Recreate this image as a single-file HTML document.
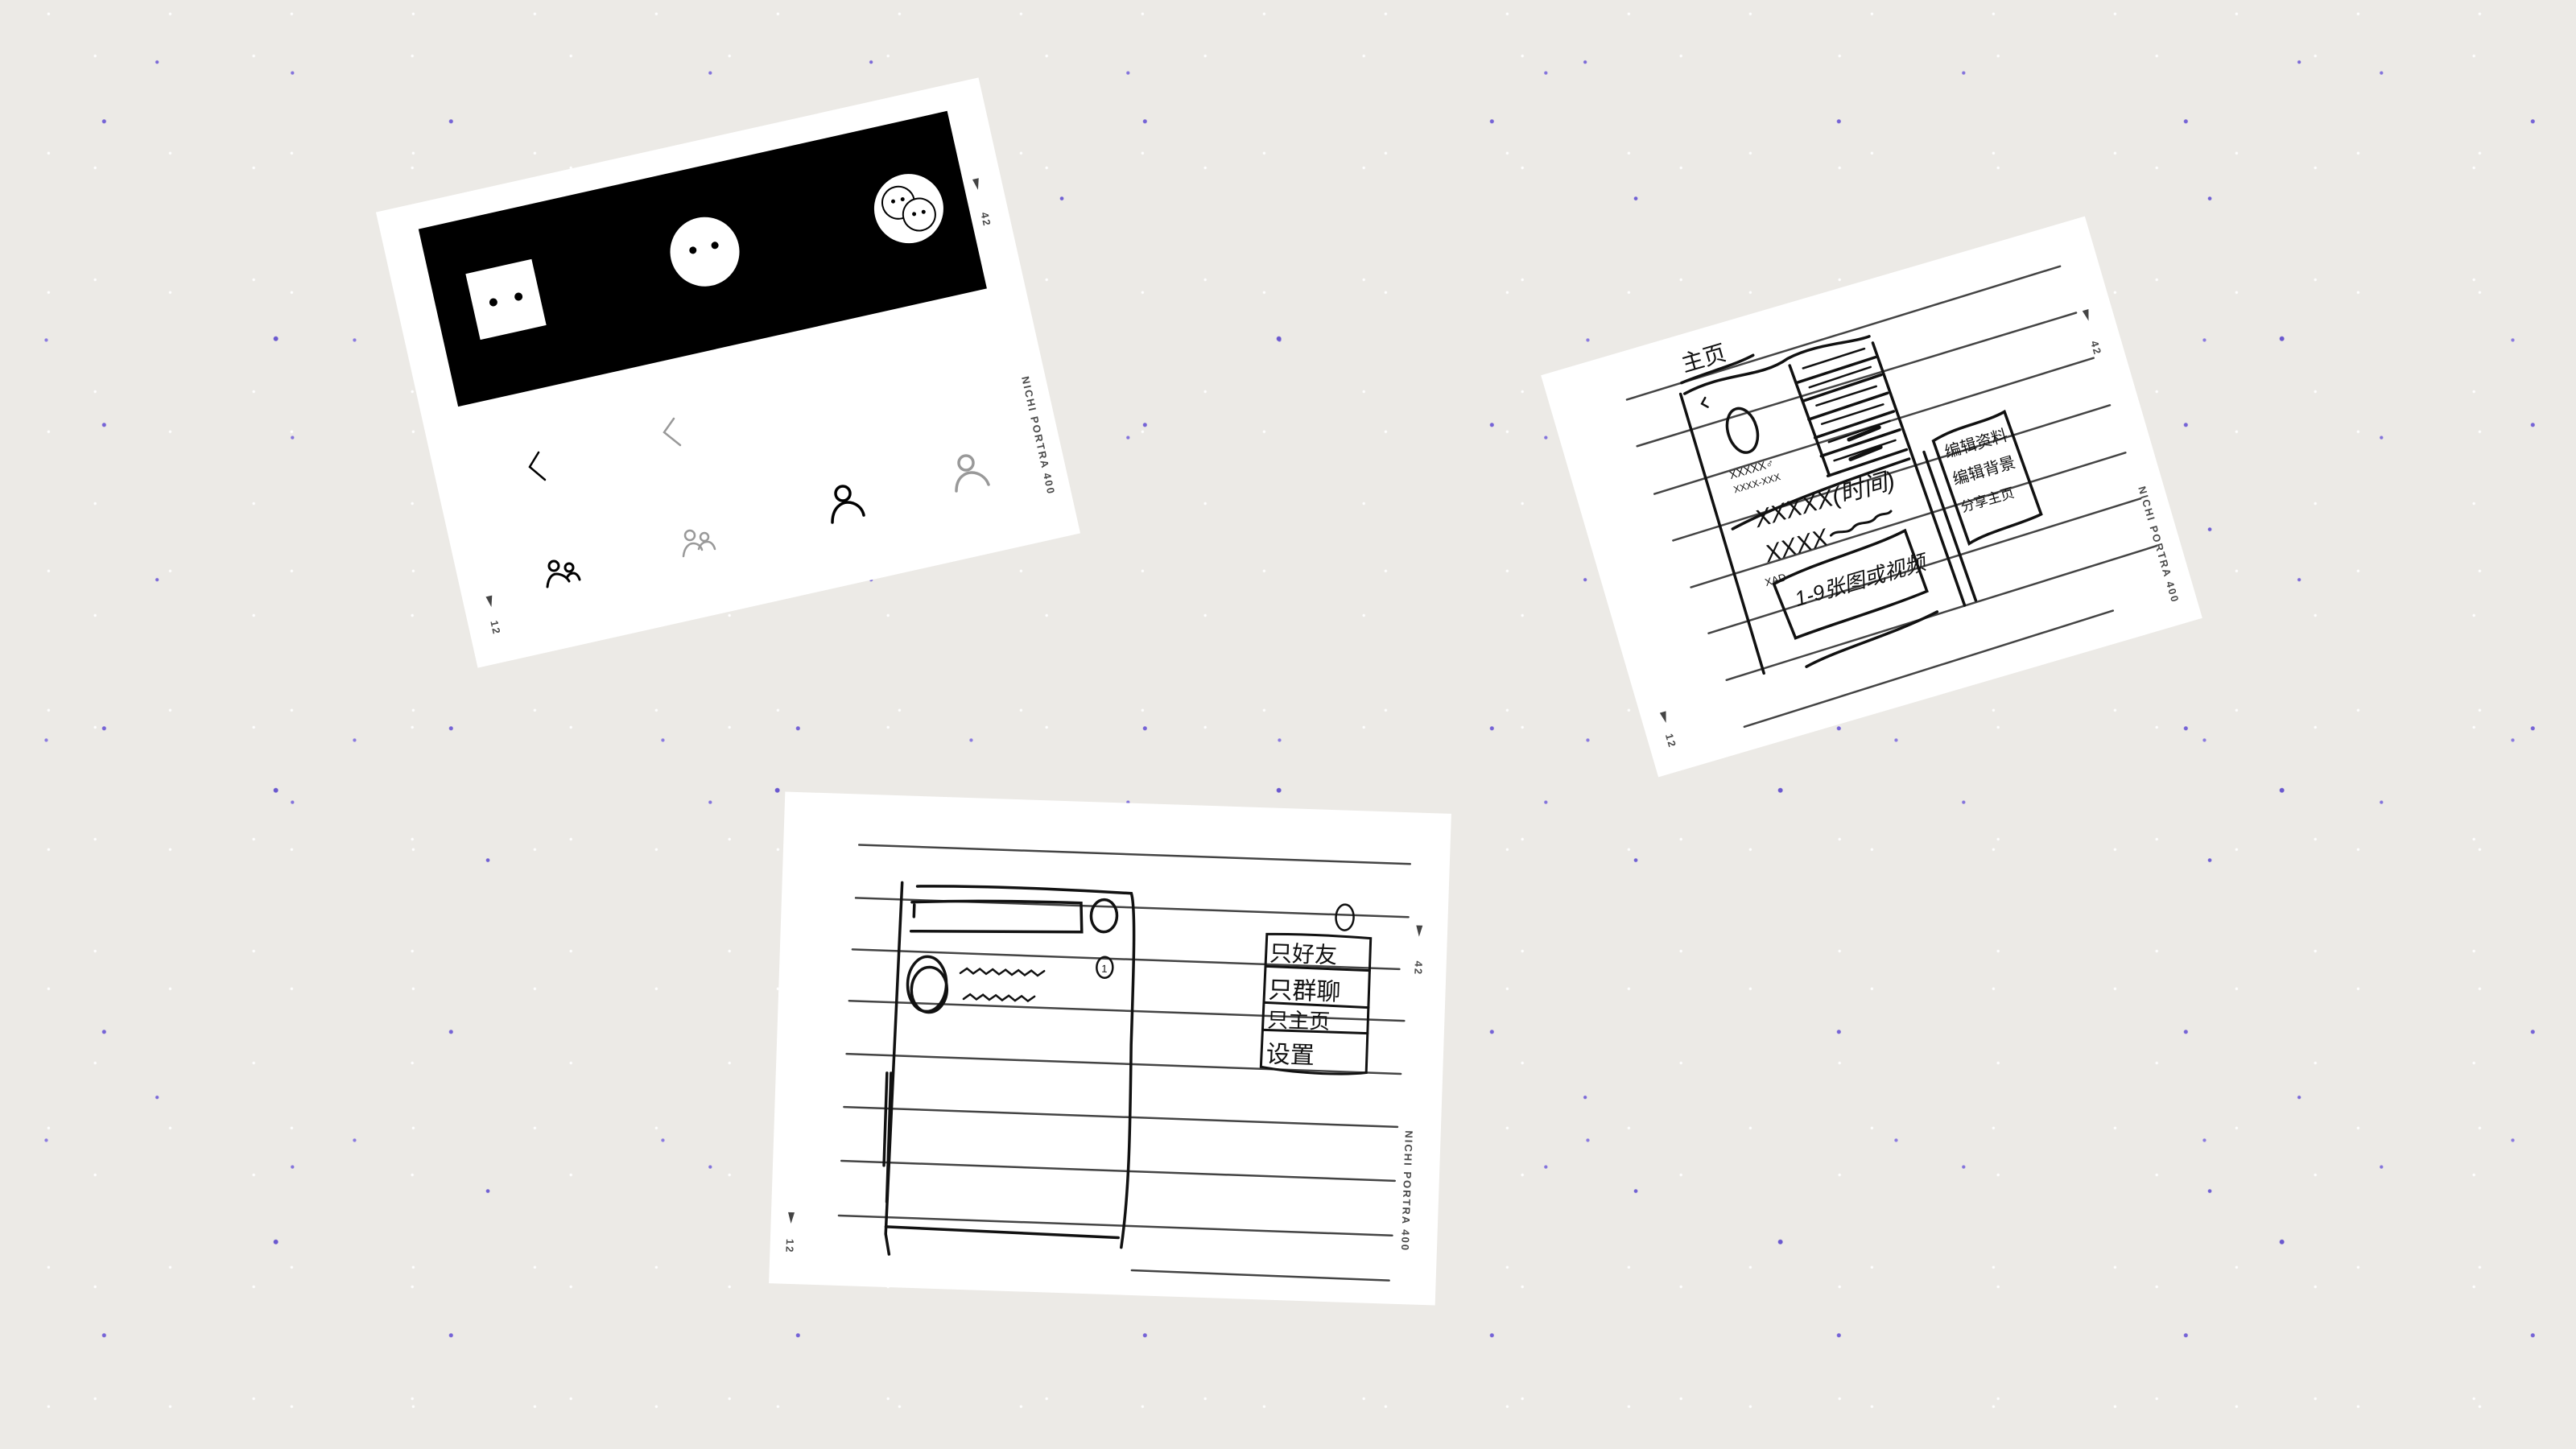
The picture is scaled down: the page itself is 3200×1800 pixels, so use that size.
<!DOCTYPE html>
<html><head><meta charset="utf-8">
<style>
html,body{margin:0;padding:0;}
body{width:3200px;height:1800px;overflow:hidden;position:relative;background-color:#ECEAE6;
background-image:
radial-gradient(circle at 30% 40%, #7563d6 0 2px, transparent 3px),
radial-gradient(circle at 70% 20%, #8373dc 0 1.6px, transparent 2.6px),
radial-gradient(circle at 55% 75%, #6a58cf 0 2.4px, transparent 3.4px),
radial-gradient(circle at 15% 85%, #8a7ae0 0 1.6px, transparent 2.6px),
radial-gradient(circle at 85% 60%, #7060d4 0 1.8px, transparent 2.8px),
radial-gradient(circle at 22% 12%, #7a68d8 0 1.6px, transparent 2.6px),
radial-gradient(circle at 40% 10%, #ffffff 0 1.2px, transparent 2.2px),
radial-gradient(circle at 60% 50%, #ffffff 0 1.2px, transparent 2.2px);
background-size:431px 377px, 519px 453px, 623px 561px, 383px 497px, 713px 411px, 887px 643px, 151px 173px, 197px 139px;}
.card{position:absolute;background:#fff;transform-origin:50% 50%;}
.card svg{position:absolute;left:0;top:0;}
.vt{position:absolute;writing-mode:vertical-rl;font-family:"Liberation Sans",sans-serif;font-weight:bold;color:#4a4a4a;font-size:13px;letter-spacing:2px;white-space:nowrap;}
.tri{position:absolute;width:0;height:0;border-left:4px solid transparent;border-right:4px solid transparent;border-top:14px solid #444;}
.hw{font-family:"Liberation Sans","Noto Sans CJK SC",sans-serif;fill:#111;}
</style></head><body>

<!-- Card 1 -->
<div class="card" style="left:521px;top:173px;width:767px;height:580px;transform:rotate(-12.6deg);">
<svg width="767" height="580" viewBox="0 0 767 580">
<rect x="47" y="32" width="673" height="226" fill="#000"/>
<rect x="92" y="99" width="84" height="84" fill="#fff"/>
<circle cx="118" cy="141" r="5" fill="#000"/><circle cx="150" cy="141" r="5" fill="#000"/>
<circle cx="388" cy="137" r="43" fill="#fff"/>
<circle cx="374" cy="132" r="4.5" fill="#000"/><circle cx="402" cy="132" r="4.5" fill="#000"/>
<circle cx="647" cy="140" r="43" fill="#fff"/>
<circle cx="636" cy="130" r="20" fill="none" stroke="#000" stroke-width="2"/>
<circle cx="658" cy="150" r="20" fill="#fff" stroke="#000" stroke-width="2"/>
<circle cx="630" cy="127" r="2.5" fill="#000"/><circle cx="642" cy="127" r="2.5" fill="#000"/>
<circle cx="652" cy="148" r="2.5" fill="#000"/><circle cx="664" cy="148" r="2.5" fill="#000"/>
</svg>
<div class="tri" style="left:732px;top:122px;"></div>
<div class="vt" style="left:730px;top:165px;">42</div>
<div class="vt" style="left:735px;top:375px;">NICHI PORTRA 400</div>
<div class="tri" style="left:29px;top:496px;"></div>
<div class="vt" style="left:25px;top:527px;">12</div>
</div>

<!-- Card 2 -->
<div class="card" style="left:1973px;top:357px;width:704px;height:520px;transform:rotate(-16.3deg);">
<svg width="704" height="520" viewBox="0 0 704 520" fill="none" stroke="#111" stroke-linecap="round">
<g stroke="#444" stroke-width="2.5">
<path d="M94 59 L657 51"/><path d="M90 118 L660 112"/><path d="M94 181 L665 172"/>
<path d="M100 243 L668 234"/><path d="M105 305 L670 296"/><path d="M110 366 L672 356"/>
<path d="M115 428 L675 418"/><path d="M120 490 L600 480"/>
</g>
<g stroke-width="3.5">
<path d="M160 71 L162 433"/><path d="M407 77 L425 422"/>
<path d="M165 72 C220 60 260 80 300 66 C340 58 380 70 405 68"/>
<path d="M165 58 C200 54 230 56 260 50"/>
<ellipse cx="221" cy="136" rx="18" ry="28"/>
<path d="M300 75 L309 220"/>
<path d="M302 98 L405 95 M303 122 L406 118 M304 146 L407 142 M305 170 L408 166 M306 194 L409 190 M307 220 L410 216"/>
<path d="M175 250 C230 238 320 232 410 228"/>
<path d="M205 330 C260 318 330 322 380 312 L385 392 C330 398 260 398 212 402 Z"/>
<path d="M215 440 C260 430 330 432 390 420"/>
<path d="M445 215 C480 205 510 212 540 205 L548 340 C520 345 480 342 452 350 Z"/>
<path d="M430 225 L440 420"/>
</g>
<text class="hw" x="172" y="46" font-size="28" stroke="none">主页</text>
<g stroke-width="2.5">
<path d="M188 84 l-6 6 l6 6"/>
<path d="M315 83 l80 -2 M316 108 l80 -3 M318 132 l78 -2 M318 156 l80 -2 M320 180 l80 -4 M320 204 l80 -3"/>
<path d="M345 184 l40 -4 M340 208 l40 -4" stroke-width="5"/>
</g>
<text class="hw" x="190" y="190" font-size="14" stroke="none">XXXXX♂</text>
<text class="hw" x="190" y="208" font-size="12" stroke="none">XXXX-XXX</text>
<text class="hw" x="205" y="257" font-size="30" stroke="none" font-style="italic">XXXXX(时间)</text>
<text class="hw" x="205" y="302" font-size="30" stroke="none" font-style="italic">XXXX</text>
<path d="M290 292 c10 -6 20 6 30 -2 c10 -6 20 4 30 -4 c8 -4 14 2 20 -2" stroke-width="3"/>
<text class="hw" x="195" y="330" font-size="13" stroke="none">XAD</text>
<text class="hw" x="225" y="365" font-size="26" stroke="none" font-style="italic">1-9张图或视频</text>
<text class="hw" x="455" y="240" font-size="20" stroke="none">编辑资料</text>
<text class="hw" x="455" y="275" font-size="20" stroke="none">编辑背景</text>
<text class="hw" x="455" y="310" font-size="17" stroke="none">分享主页</text>
</svg>
<div class="tri" style="left:668px;top:112px;"></div>
<div class="vt" style="left:664px;top:152px;">42</div>
<div class="vt" style="left:670px;top:342px;">NICHI PORTRA 400</div>
<div class="tri" style="left:24px;top:444px;"></div>
<div class="vt" style="left:20px;top:472px;">12</div>
</div>

<!-- Card 3 -->
<div class="card" style="left:965px;top:997px;width:828px;height:611px;transform:rotate(1.9deg);">
<svg width="828" height="611" viewBox="0 0 828 611" fill="none" stroke="#111" stroke-linecap="round">
<g stroke="#444" stroke-width="2.5">
<path d="M94 63 L779 64"/><path d="M92 129 L779 130"/><path d="M90 193 L770 195"/>
<path d="M88 257 L778 259"/><path d="M87 323 L776 325"/><path d="M86 389 L774 391"/>
<path d="M85 456 L773 458"/><path d="M84 524 L772 526"/><path d="M450 580 L770 582"/>
</g>
<g stroke-width="3.5">
<path d="M149 108 L143 545 L148 570"/>
<path d="M168 112 C260 108 360 110 434 112 C440 130 440 200 440 300 C442 400 444 480 436 552"/>
<path d="M143 536 L432 540"/>
<path d="M162 132 C220 128 300 126 372 126 L374 162 C300 164 220 166 162 168"/>
<path d="M165 135 L165 150"/>
<ellipse cx="401" cy="141" rx="16" ry="20"/>
<ellipse cx="184" cy="233" rx="24" ry="34"/>
<ellipse cx="187" cy="240" rx="22" ry="28"/>
<ellipse cx="404" cy="205" rx="10" ry="13" stroke-width="2.5"/>
<path d="M138 345 L138 460 M143 345 L143 505"/>
<ellipse cx="700" cy="133" rx="11" ry="16" stroke-width="2.5"/>
<path d="M604 157 C650 155 690 156 733 158 L733 325 C700 330 640 328 602 322 Z" stroke-width="3"/>
<path d="M604 197 L733 198 M604 242 L733 244 M604 276 L733 276" stroke-width="3"/>
</g>
<g stroke-width="2.5">
<path d="M225 218 l8 -6 l8 6 l8 -6 l8 6 l8 -6 l8 6 l8 -6 l8 6 l8 -6 l8 6 l8 -6 l8 6 l8 -6"/>
<path d="M230 250 l8 -6 l8 6 l8 -6 l8 6 l8 -6 l8 6 l8 -6 l8 6 l8 -6 l8 6 l8 -6"/>
</g>
<text class="hw" x="400" y="211" font-size="13" stroke="none">1</text>
<text class="hw" x="608" y="190" font-size="28" stroke="none">只好友</text>
<text class="hw" x="608" y="236" font-size="30" stroke="none">只群聊</text>
<text class="hw" x="608" y="272" font-size="26" stroke="none">只主页</text>
<text class="hw" x="608" y="316" font-size="30" stroke="none">设置</text>
</svg>
<div class="tri" style="left:789px;top:140px;"></div>
<div class="vt" style="left:786px;top:184px;">42</div>
<div class="vt" style="left:781px;top:395px;">NICHI PORTRA 400</div>
<div class="tri" style="left:21px;top:522px;"></div>
<div class="vt" style="left:17px;top:555px;">12</div>
</div>

<!-- Card 1 icons (upright) -->
<svg width="3200" height="1800" style="position:absolute;left:0;top:0;" fill="none" stroke-linecap="round">
<path d="M669 562 L658 580 L677 596" stroke="#000" stroke-width="2.5"/>
<path d="M837 520 L825 537 L845 553" stroke="#999" stroke-width="2.5"/>
<circle cx="1047" cy="613" r="9" stroke="#000" stroke-width="3.5"/>
<path d="M1034 649 C1034 630 1046 624 1053 624 C1062 624 1071 630 1073 640" stroke="#000" stroke-width="3.5"/>
<circle cx="1200" cy="575" r="9" stroke="#999" stroke-width="3.5"/>
<path d="M1188 610 C1188 592 1200 587 1207 587 C1216 587 1225 593 1228 602" stroke="#999" stroke-width="3.5"/>
<circle cx="857" cy="665" r="6" stroke="#999" stroke-width="2.5"/>
<circle cx="875" cy="667" r="5" stroke="#999" stroke-width="2.5"/>
<path d="M849 691 C850 680 856 675 861 675 C867 675 871 679 872 683" stroke="#999" stroke-width="2.5"/>
<path d="M868 682 C870 676 874 673 879 673 C884 673 887 678 888 682" stroke="#999" stroke-width="2.5"/>
<circle cx="688" cy="703" r="6" stroke="#000" stroke-width="3"/>
<circle cx="707" cy="705" r="5" stroke="#000" stroke-width="3"/>
<path d="M680 729 C681 718 686 713 691 713 C698 713 704 717 707 722" stroke="#000" stroke-width="3"/>
<path d="M704 718 C706 714 709 712 712 712 C716 712 719 716 720 720" stroke="#000" stroke-width="3"/>
</svg>
</body></html>
